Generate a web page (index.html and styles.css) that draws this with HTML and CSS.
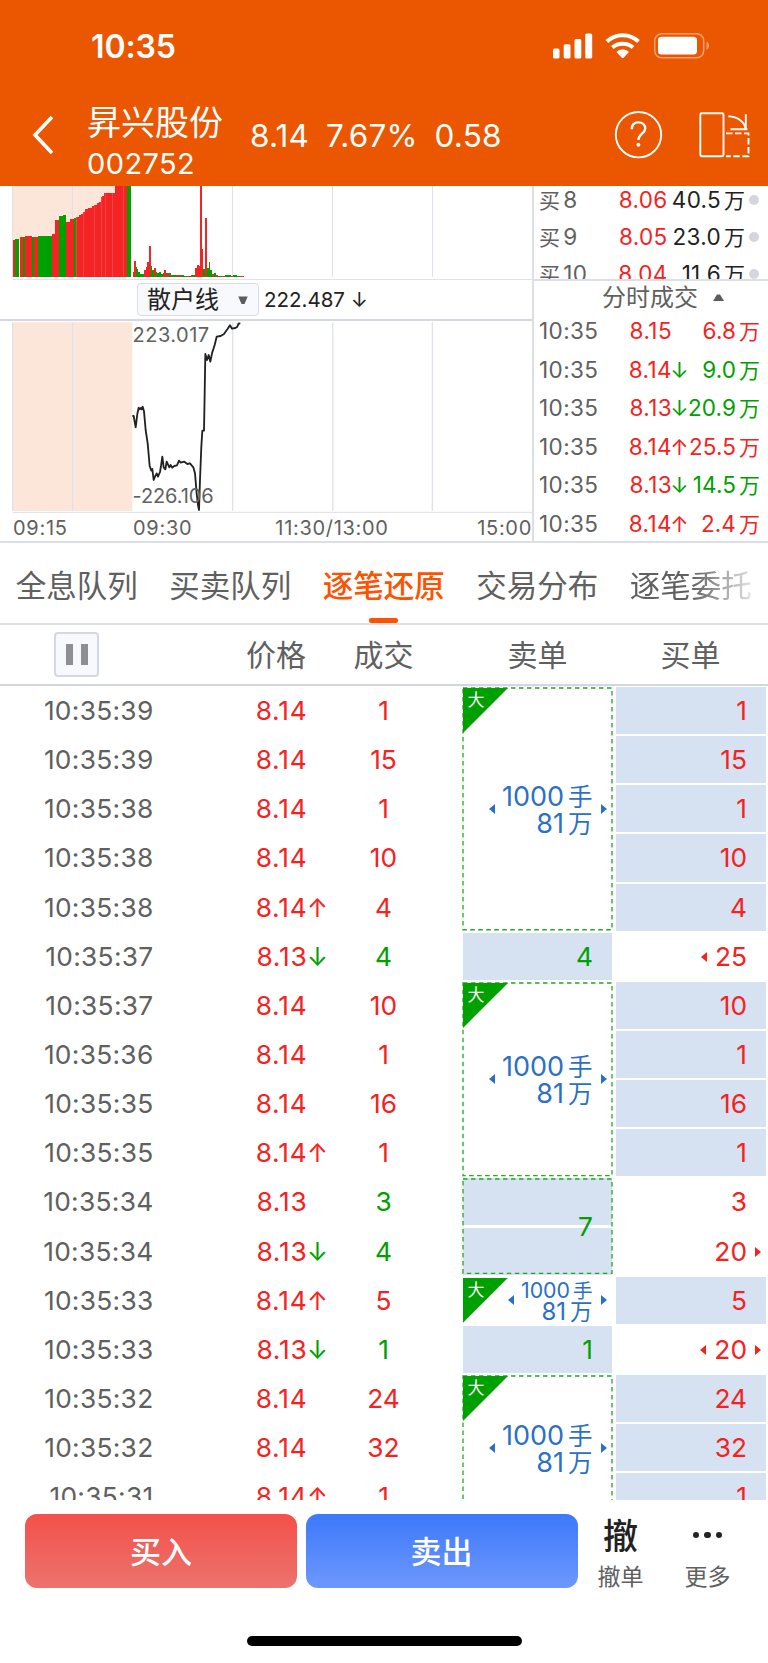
FILE: index.html
```html
<!DOCTYPE html>
<html lang="zh-CN">
<head>
<meta charset="utf-8">
<title>昇兴股份 002752</title>
<link rel="stylesheet" href="styles.css">
</head>
<body>
<div class="app">
  <header class="top">
    <div class="status">
      <span class="clock">10:35</span>
      <svg class="sys" width="157" height="26" viewBox="0 0 157 26">
        <g fill="#fff">
          <rect x="0" y="15.500" width="6.500" height="10" rx="1.500"/>
          <rect x="10.700" y="11.300" width="6.800" height="14.200" rx="1.500"/>
          <rect x="21.500" y="6" width="6.800" height="19.500" rx="1.500"/>
          <rect x="32.200" y="0.500" width="7" height="25" rx="1.500"/>
          <path d="M64 18.400C67.400 15.900 72 15.900 75.400 18.400C75.900 18.800 75.900 19.200 75.500 19.600L70.600 24.700C70.100 25.200 69.300 25.200 68.800 24.700L63.900 19.600C63.500 19.200 63.500 18.800 64 18.400Z"/>
          <rect x="105" y="3.700" width="39" height="17.800" rx="3.500"/>
          <path d="M153.500 8.500C157 10 157 15.300 153.500 16.800Z" opacity=".45"/>
        </g>
        <g fill="none" stroke="#fff" stroke-width="4">
          <path d="M53.900 8.500C63 0.200 76.400 0.200 85.500 8.500"/>
          <path d="M59.400 14.500C65 9.400 74.400 9.400 80 14.500"/>
        </g>
        <rect x="101.700" y="0.800" width="49" height="24" rx="7" fill="none" stroke="#fff" stroke-opacity=".45" stroke-width="1.500"/>
      </svg>
    </div>
    <div class="nav">
      <svg class="back" width="24" height="40" viewBox="0 0 24 40"><path d="M21 2L4 20L21 38" fill="none" stroke="#fff" stroke-width="3.600"/></svg>
      <div class="stock"><div class="name">昇兴股份</div><div class="code">002752</div></div>
      <div class="quote"><span>8.14</span><span>7.67%</span><span>0.58</span></div>
      <svg class="tools" width="136" height="50" viewBox="0 0 136 50" fill="none" stroke="#fff" stroke-width="1.900">
        <circle cx="24.500" cy="24.700" r="22.700"/>
        <path d="M17.800 19.200C17.800 14.700 20.500 12.400 24.500 12.400C28.500 12.400 31.200 14.900 31.200 18.400C31.200 23.700 24.400 23.700 24.400 30" stroke-width="2.400"/>
        <circle cx="24.400" cy="34.800" r="2" fill="#fff" stroke="none"/>
        <rect x="86.300" y="3.300" width="23.200" height="43" rx="1.500"/>
        <path d="M114.300 6.300C123.500 6.800 130.500 11.500 131.500 18.500M131.800 4.300V20M116.500 19.300H133.500"/>
        <path d="M112 23.400H134.500V46.200H112" stroke-dasharray="6.500 2.500"/>
      </svg>
    </div>
  </header>

  <section class="market">
    <div class="charts">
      <svg class="volume" width="532" height="94" viewBox="0 18 1596 282" shape-rendering="crispEdges">
        <path fill="#fce6da" d="M38 18H396V290H38Z"/>
        <path stroke="#dfe2ec" stroke-width="4" d="M38 18V290M218 18V290M698 18V290M998 18V290M1297 18V290"/>
        <path stroke="#dfe2ea" stroke-width="3" d="M38 298H1596"/>
        <path fill="#f42424" d="M40 290V180H45V290ZM60 290V170H70V290ZM75 290V167H97V290ZM103 290V170H113V290ZM156 290V162H166V121H178V290ZM199 290V127H210V116H221V290ZM227 290V111H238V104H243V101H249V96H254V87H265V83H276V79H281V74H292V70H297V65H302V51H307V48H313V39H345V18H381V290Z"/>
        <path fill="#00a000" d="M45 290V176H56V290ZM70 290V170H75V290ZM97 290V172H103V290ZM113 290V168H156V290ZM178 290V109H188V104H199V290ZM221 290V113H227V290ZM381 290V18H392V290Z"/>
        <path class="stripes" stroke="#fff" stroke-opacity=".14" stroke-dasharray="1.500 9.400" d="M228 154H381"/>
        <path fill="#f42424" d="M399 290V277H402V244H407V290ZM431 290V270H437V262H441V245H446V199H452V290ZM462 290V263H467V290ZM488 290V280H491V270H497V280H502V290ZM507 290V279H513V290ZM532 290V286H542V290ZM560 290V287H572V290ZM586 290V264H591V255H596V258H601V18H606V207H610V290ZM616 290V114H621V290ZM637 290V282H642V290ZM648 290V284H655V290ZM666 290V287H675V290ZM692 290V287H700V290ZM722 290V287H731V290Z"/>
        <path fill="#00a000" d="M407 290V261H410V268H415V276H420V283H431V290ZM452 290V258H457V270H462V290ZM467 290V275H472V280H477V276H483V283H488V290ZM502 290V278H507V290ZM513 290V285H532V290ZM542 290V284H551V288H560V290ZM572 290V284H586V290ZM610 290V268H616V290ZM621 290V265H626V247H631V270H637V290ZM642 290V278H648V290ZM655 290V287H666V290ZM675 290V286H692V290ZM700 290V286H710V288H722V290Z"/>
      </svg>
      <div class="indicator">
        <div class="select"><span>散户线</span><svg width="10" height="9" viewBox="0 0 10 9"><path d="M0.300 0.500H9.700L6.500 8H3.500Z" fill="#5c5c5c"/></svg></div>
        <span class="reading">222.487 ↓</span>
      </div>
      <div class="retail">
        <svg width="532" height="192" viewBox="0 423 1596 576">
          <path fill="#fce6da" d="M38 427H397V993H38Z"/>
          <path stroke="#dfe2ec" stroke-width="4" d="M38 427V993M218 427V993M698 427V993M998 427V993M1297 427V993"/>
          <path stroke="#dcdfe6" stroke-width="3" d="M38 997H1596"/>
          <path fill="none" stroke="#222" stroke-width="5.500" stroke-linejoin="round" d="M397 708L401 708L407 742L412 702L416 683L419 688L423 684L425 688L428 680L432 694L437 750L443 790L449 858L454 872L457 867L461 900L465 890L470 880L474 890L480 876L483 858L487 830L491 862L496 868L500 845L508 862L512 855L517 863L523 858L531 856L537 842L542 848L553 845L562 852L570 850L580 862L585 880L590 940L594 975L597 990L600 900L604 800L607 752L612 752L614 640L616 522L621 540L626 525L631 545L636 520L644 495L650 470L662 468L672 462L682 448L690 436L696 446L706 444L712 440L716 430L721 431"/>
        </svg>
        <span class="scale hi">223.017</span>
        <span class="scale lo">-226.106</span>
      </div>
      <div class="axis"><span>09:15</span><span>09:30</span><span>11:30/13:00</span><span>15:00</span></div>
    </div>
    <aside class="side">
      <div class="depth">
        <div class="lv"><span class="k"><i>买</i>8</span><span class="p">8.06</span><span class="q">40.5<i>万</i></span><b></b></div>
        <div class="lv"><span class="k"><i>买</i>9</span><span class="p">8.05</span><span class="q">23.0<i>万</i></span><b></b></div>
        <div class="lv"><span class="k"><i>买</i>10</span><span class="p">8.04</span><span class="q">11.6<i>万</i></span><b></b></div>
      </div>
      <div class="ticks-head"><span>分时成交</span><svg width="11" height="7" viewBox="0 0 11 7"><path d="M0 7L4 0.500H7L11 7Z" fill="#5c5c5c"/></svg></div>
      <div class="tick"><span class="t">10:35</span><span class="p">8.15</span><span class="a"></span><span class="q red">6.8<i>万</i></span></div>
      <div class="tick"><span class="t">10:35</span><span class="p">8.14</span><span class="a green">↓</span><span class="q green">9.0<i>万</i></span></div>
      <div class="tick"><span class="t">10:35</span><span class="p">8.13</span><span class="a green">↓</span><span class="q green">20.9<i>万</i></span></div>
      <div class="tick"><span class="t">10:35</span><span class="p">8.14</span><span class="a red">↑</span><span class="q red">25.5<i>万</i></span></div>
      <div class="tick"><span class="t">10:35</span><span class="p">8.13</span><span class="a green">↓</span><span class="q green">14.5<i>万</i></span></div>
      <div class="tick"><span class="t">10:35</span><span class="p">8.14</span><span class="a red">↑</span><span class="q red">2.4<i>万</i></span></div>
    </aside>
  </section>

  <nav class="tabs">
    <span>全息队列</span><span>买卖队列</span><span class="on">逐笔还原</span><span>交易分布</span><span class="fade">逐笔委托</span>
  </nav>

  <div class="cols">
    <div class="pause"><i></i><i></i></div>
    <span class="c-price">价格</span><span class="c-vol">成交</span><span class="c-order">卖单</span><span class="c-order">买单</span>
  </div>

  <main class="book">
    <div class="trades">
      <div class="row"><span class="time">10:35:39</span><span class="price">8.14</span><span class="arr"></span><span class="vol red">1</span></div>
      <div class="row"><span class="time">10:35:39</span><span class="price">8.14</span><span class="arr"></span><span class="vol red">15</span></div>
      <div class="row"><span class="time">10:35:38</span><span class="price">8.14</span><span class="arr"></span><span class="vol red">1</span></div>
      <div class="row"><span class="time">10:35:38</span><span class="price">8.14</span><span class="arr"></span><span class="vol red">10</span></div>
      <div class="row"><span class="time">10:35:38</span><span class="price">8.14</span><span class="arr red">↑</span><span class="vol red">4</span></div>
      <div class="row"><span class="time">10:35:37</span><span class="price">8.13</span><span class="arr green">↓</span><span class="vol green">4</span></div>
      <div class="row"><span class="time">10:35:37</span><span class="price">8.14</span><span class="arr"></span><span class="vol red">10</span></div>
      <div class="row"><span class="time">10:35:36</span><span class="price">8.14</span><span class="arr"></span><span class="vol red">1</span></div>
      <div class="row"><span class="time">10:35:35</span><span class="price">8.14</span><span class="arr"></span><span class="vol red">16</span></div>
      <div class="row"><span class="time">10:35:35</span><span class="price">8.14</span><span class="arr red">↑</span><span class="vol red">1</span></div>
      <div class="row"><span class="time">10:35:34</span><span class="price">8.13</span><span class="arr"></span><span class="vol green">3</span></div>
      <div class="row"><span class="time">10:35:34</span><span class="price">8.13</span><span class="arr green">↓</span><span class="vol green">4</span></div>
      <div class="row"><span class="time">10:35:33</span><span class="price">8.14</span><span class="arr red">↑</span><span class="vol red">5</span></div>
      <div class="row"><span class="time">10:35:33</span><span class="price">8.13</span><span class="arr green">↓</span><span class="vol green">1</span></div>
      <div class="row"><span class="time">10:35:32</span><span class="price">8.14</span><span class="arr"></span><span class="vol red">24</span></div>
      <div class="row"><span class="time">10:35:32</span><span class="price">8.14</span><span class="arr"></span><span class="vol red">32</span></div>
      <div class="row"><span class="time">10:35:31</span><span class="price">8.14</span><span class="arr red">↑</span><span class="vol red">1</span></div>
    </div>
    <div class="sell">
      <div class="order big s5"><svg class="dash" width="100%" height="100%"><rect/></svg><span class="tag">大</span><i class="l"></i><p>1000<u>手</u><br>81<u>万</u></p><i class="r"></i></div>
      <div class="order fill green">4</div>
      <div class="order big s4"><svg class="dash" width="100%" height="100%"><rect/></svg><span class="tag">大</span><i class="l"></i><p>1000<u>手</u><br>81<u>万</u></p><i class="r"></i></div>
      <div class="order pair s2 green"><div class="half"></div><div class="half"></div><svg class="dash" width="100%" height="100%"><rect/></svg><span class="sum">7</span></div>
      <div class="order big small"><span class="tag">大</span><i class="l"></i><p><small>1000<u>手</u></small><br>81<u>万</u></p><i class="r"></i></div>
      <div class="order fill green">1</div>
      <div class="order big s3"><svg class="dash" width="100%" height="120%"><rect/></svg><span class="tag">大</span><i class="l"></i><p>1000<u>手</u><br>81<u>万</u></p><i class="r"></i></div>
    </div>
    <div class="buy">
      <div class="cell fill">1</div>
      <div class="cell fill">15</div>
      <div class="cell fill">1</div>
      <div class="cell fill">10</div>
      <div class="cell fill">4</div>
      <div class="cell"><i class="l"></i>25</div>
      <div class="cell fill">10</div>
      <div class="cell fill">1</div>
      <div class="cell fill">16</div>
      <div class="cell fill">1</div>
      <div class="cell">3</div>
      <div class="cell">20<i class="r"></i></div>
      <div class="cell fill">5</div>
      <div class="cell"><i class="l"></i>20<i class="r"></i></div>
      <div class="cell fill">24</div>
      <div class="cell fill">32</div>
      <div class="cell fill">1</div>
    </div>
  </main>

  <footer class="bar">
    <div class="actions">
      <button class="btn buy-btn">买入</button>
      <button class="btn sell-btn">卖出</button>
      <div class="act"><strong>撤</strong><span>撤单</span></div>
      <div class="act more"><div class="dots"><i></i><i></i><i></i></div><span>更多</span></div>
    </div>
    <div class="home"></div>
  </footer>
</div>
</body>
</html>
```
FILE: styles.css
```css
* { box-sizing: border-box; }
body { margin: 0; background: #fff; font-family: Inter, "Noto Sans CJK SC", sans-serif; color: #606060; }
i, u { font-style: normal; text-decoration: none; }
p { margin: 0; }
span { white-space: nowrap; }
.red { color: #f52222; }
.green { color: #00a000; }
.app { width: 768px; height: 1663px; overflow: hidden; display: flex; flex-direction: column; }

/* header */
.top { height: 186px; flex: none; background: #eb5600; color: #fff; }
.status { height: 92px; display: flex; align-items: center; justify-content: space-between; padding: 0 58px 0 91px; }
.clock { font-size: 32px; font-weight: 600; line-height: 40px; letter-spacing: -0.1px; padding-top: 1px; }
.sys { flex: none; margin-top: -1px; }
.nav { height: 94px; display: flex; align-items: flex-start; padding-left: 31px; }
.back { margin-top: 23px; }
.stock { width: 163px; margin-left: 32px; }
.name { font-size: 34px; line-height: 44px; font-weight: 400; padding-top: 9px; }
.code { font-size: 29px; line-height: 36px; padding-top: 1px; letter-spacing: 0.4px; }
.quote { display: flex; gap: 17px; font-size: 31.500px; line-height: 40px; padding-top: 24px; letter-spacing: 0.2px; flex: 1; }
.tools { margin: 18px 18px 0 0; flex: none; }

/* charts */
.market { display: flex; height: 357px; border-bottom: 2px solid #dcdfe6; flex: none; }
.charts { width: 532px; flex: none; }
.charts svg { display: block; }
.stripes { stroke-width: 272px; }
.indicator { height: 41px; display: flex; align-items: center; padding-left: 137px; border-bottom: 2px solid #d5d8e0; }
.select { width: 122px; height: 33px; border: 1.500px solid #d9dce3; border-radius: 4px; background: #f7f9fc; display: flex; align-items: center; justify-content: space-between; padding: 1px 10px 0 9px; font-size: 24px; line-height: 30px; color: #222; }
.reading { font-size: 20.500px; color: #222; margin-left: 5px; }
.retail { position: relative; height: 192px; }
.scale { position: absolute; left: 132.500px; font-size: 20px; line-height: 24px; }
.hi { top: 2px; letter-spacing: 0.5px; }
.lo { top: 163px; letter-spacing: -0.1px; }
.axis { display: grid; grid-template-columns: 120px 78px 242px 1fr; height: 28px; padding-left: 13px; font-size: 20px; line-height: 31px; letter-spacing: 0.7px; }
.axis span:nth-child(3) { text-align: center; }
.axis span:nth-child(4) { text-align: right; }

/* depth and ticks */
.side { flex: 1; border-left: 2px solid #dcdfe6; }
.depth { height: 95px; overflow: hidden; border-bottom: 2px solid #dcdfe6; font-size: 22.500px; letter-spacing: 0.3px; }
.lv { height: 37px; line-height: 37px; position: relative; top: -5px; display: grid; grid-template-columns: 60px 68.500px 77.500px 1fr; padding-left: 5px; }
.lv .k i { font-size: 21px; margin-right: 3px; }
.p { color: #f52222; text-align: right; }
.q { text-align: right; }
.q i { font-size: 21px; margin-left: 3px; letter-spacing: 0; }
.lv .q { color: #222; }
.lv b { width: 10px; height: 10px; border-radius: 50%; background: #d3d6de; margin: 14px 0 0 4px; }
.ticks-head { height: 31px; display: flex; align-items: center; gap: 15px; padding-left: 68px; font-size: 24px; line-height: 31px; padding-top: 1px; }
.tick { height: 38.500px; line-height: 38.500px; font-size: 22.500px; letter-spacing: 0.4px; display: grid; grid-template-columns: 60px 73px 15px 73px; padding-left: 5px; }
.tick .a { text-align: center; font-size: 22px; letter-spacing: 0; display: flex; justify-content: center; }
.tick .q { justify-self: end; letter-spacing: 0.1px; }

/* tabs */
.tabs { height: 82px; border-bottom: 2px solid #dcdfe6; display: grid; grid-template-columns: repeat(5, 153.500px); text-align: center; font-size: 30.500px; line-height: 85px; flex: none; }
.tabs .on { color: #ff5200; font-weight: 500; display: flex; flex-direction: column; align-items: center; height: 80px; }
.tabs .on::after { content: ""; width: 29px; height: 5px; border-radius: 2px; background: #ff5200; flex: none; margin-top: -10px; }
.fade { -webkit-mask-image: linear-gradient(90deg, #000 50%, transparent 98%); mask-image: linear-gradient(90deg, #000 50%, transparent 98%); }

.cols { height: 61px; border-bottom: 2px solid #d3d6e2; display: flex; font-size: 30px; line-height: 61px; flex: none; }
.pause { width: 45px; height: 45px; margin: 7px 0 0 54px; border: 2px solid #d5d8e0; border-radius: 4px; background: #f7f9fc; display: flex; justify-content: center; align-items: center; gap: 8px; }
.pause i { width: 7px; height: 21px; background: #8e8e93; }
.c-price { width: 207px; text-align: right; }
.c-vol { width: 155px; text-align: center; }
.c-order { width: 153px; text-align: center; }

/* order book */
.book { height: 814px; padding-top: 1px; overflow: hidden; display: flex; font-size: 26.300px; flex: none; }
.trades { width: 463px; }
.row { height: 49.150px; line-height: 48.400px; display: grid; grid-template-columns: 153.500px 154px 20px 1fr; }
.time, .price { text-align: right; }
.time { letter-spacing: 0.3px; }
.price { color: #f52222; letter-spacing: 0.8px; }
.arr { display: flex; justify-content: center; font-size: 25px; }
.vol { width: 112px; text-align: center; }
.sell { width: 149px; margin-right: 4px; }
.order { position: relative; height: 47.150px; margin-bottom: 2px; padding-right: 19px; text-align: right; line-height: 48.400px; }
.fill { background: #d6e2f2; }
.s5 { height: 243.750px; }
.s4 { height: 194.600px; }
.s3 { height: 145.450px; }
.s2 { height: 96.300px; }
.pair { display: flex; flex-direction: column; justify-content: space-between; padding: 0; }
.half { height: 47px; background: #d6e2f2; }
.dash { position: absolute; left: 0; top: 0; overflow: visible; }
.dash rect { x: 0; y: 1px; width: 100%; height: calc(100% - 2px); fill: none; stroke: #22a822; stroke-width: 1.300px; stroke-dasharray: 4.500px 3.500px; }
.sum { position: absolute; right: 19px; top: 24.500px; }
.big { display: flex; align-items: center; justify-content: flex-end; padding-right: 5px; color: #2b70c5; }
.big p { line-height: 27px; font-size: 27px; padding-right: 8.500px; padding-top: 2px; }
.big u { font-size: 24.500px; margin-left: 4px; line-height: 20px; }
.l, .r { width: 0; height: 0; border: 5px solid transparent; flex: none; }
.big .l { border-right: 6.500px solid #2b70c5; border-left: 0; margin-right: 7px; }
.big .r { border-left: 6.500px solid #2b70c5; border-right: 0; }
.tag { position: absolute; left: 0; top: 1px; width: 45px; height: 45px; background: #00a000; clip-path: polygon(0 0, 100% 0, 0 100%); color: #fff; font-size: 17px; line-height: 25px; padding-left: 4.500px; text-align: left; }
.small p { font-size: 24px; line-height: 22.500px; padding-top: 2px; }
.small p u { font-size: 22.500px; }
.small small { font-size: 21.300px; }
.small p small u { font-size: 19.500px; margin-left: 3px; }
.buy { width: 150px; }
.cell { position: relative; height: 47.150px; margin-bottom: 2px; padding-right: 19px; text-align: right; line-height: 48.400px; color: #f52222; }
.cell .l { display: inline-block; border-right: 6px solid #f52222; border-left: 0; margin-right: 8px; vertical-align: 4px; }
.cell .r { position: absolute; right: 5px; top: 19px; border-left: 6px solid #f52222; border-right: 0; }

/* footer */
.bar { flex: 1; }
.actions { display: flex; height: 136px; padding: 14px 0 0 25px; }
.btn { width: 272px; height: 74px; margin: 0 8.500px 0 0; border: 0; border-radius: 12px; color: #fff; font: 500 31px/71px "Noto Sans CJK SC", sans-serif; padding: 0 0 3px; }
.buy-btn { background: linear-gradient(#f4504a, #ec736d); }
.sell-btn { background: linear-gradient(#3d78fa, #6d98fd); }
.act { width: 87px; margin-left: -9px; display: flex; flex-direction: column; align-items: center; font-size: 23px; }
.act + .act { margin-left: 0; }
.act strong { font-weight: 500; font-size: 35px; line-height: 44px; height: 46px; color: #222; }
.act span { line-height: 34px; }
.dots { height: 46px; display: flex; gap: 5px; align-items: center; padding-bottom: 4px; }
.dots i { width: 6.500px; height: 6.500px; border-radius: 50%; background: #222; }
.home { width: 275px; height: 10px; border-radius: 5px; background: #000; margin-left: 247px; }
```
